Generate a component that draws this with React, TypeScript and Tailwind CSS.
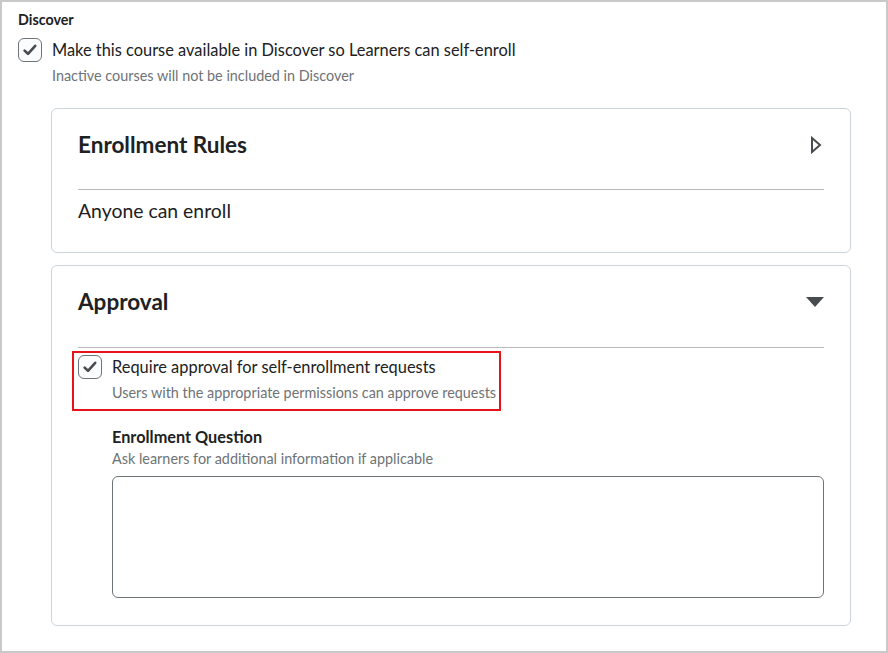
import React from "react";

function Check() {
  return (
    <div className="w-6 h-6 shrink-0 rounded-[6px] border border-[#6e7477] bg-[#fbfcfd] flex items-center justify-center">
      <svg width="16" height="16" viewBox="0 0 16 16">
        <path d="M2.6 8.6 L6 11.8 L13.2 3.8" fill="none" stroke="#494c4e" strokeWidth="2.6" strokeLinecap="round" strokeLinejoin="round" />
      </svg>
    </div>
  );
}

export default function App() {
  return (
    <div className="w-[888px] h-[653px] bg-white border-2 border-[#c9c9c9] text-[#202122]" style={{ fontFamily: "Lato, 'Noto Sans', sans-serif" }}>
      <div className="pl-[16px] pt-[9px] pr-[35px]">
        <div className="text-[14.3px] font-bold leading-[18px]">Discover</div>
        <div className="flex items-start gap-[10px] mt-[9px]">
          <Check />
          <div>
            <div className="text-[16.4px] leading-[22px] mt-px">Make this course available in Discover so Learners can self-enroll</div>
            <div className="text-[14.4px] text-[#6e7376] leading-[18px] mt-[6px]">Inactive courses will not be included in Discover</div>
          </div>
        </div>
        <div className="ml-[33px] mt-[23px] flex flex-col gap-[12px]">
          <div className="border border-[#cdd5dc] rounded-[6px] px-[26px] h-[145px]">
            <div className="flex items-center justify-between h-[81px] border-b border-[#b9b9b9]">
              <div className="text-[22.5px] font-bold leading-none mt-[-8px]">Enrollment Rules</div>
              <svg width="12" height="18" viewBox="0 0 12 18" className="mt-[-8px] mr-[2px]">
                <path d="M2 2 L10 9 L2 16 Z" fill="none" stroke="#494c4e" strokeWidth="2" strokeLinejoin="miter" />
              </svg>
            </div>
            <div className="text-[19.4px] leading-none mt-[11px]">Anyone can enroll</div>
          </div>
          <div className="border border-[#cdd5dc] rounded-[6px] px-[26px] h-[361px]">
            <div className="flex items-center justify-between h-[82px] border-b border-[#b9b9b9]">
              <div className="text-[22.5px] font-bold leading-none mt-[-9px]">Approval</div>
              <svg width="18" height="10" viewBox="0 0 18 10" className="mt-[-9px]">
                <path d="M0 0 L18 0 L9 10 Z" fill="#494c4e" />
              </svg>
            </div>
            <div className="ml-[-6px] mt-[3px] w-[429px] h-[60px] border-2 border-[#e8121b] pl-[4px] pt-[2px]">
              <div className="flex items-start gap-[10px]">
                <Check />
                <div>
                  <div className="text-[16.4px] leading-[22px] mt-[1px]">Require approval for self-enrollment requests</div>
                  <div className="text-[14.4px] text-[#6e7376] leading-[18px] mt-[6px]">Users with the appropriate permissions can approve requests</div>
                </div>
              </div>
            </div>
            <div className="ml-[34px] mt-[16px]">
              <div className="text-[16.3px] font-bold leading-[20px]">Enrollment Question</div>
              <div className="text-[14.4px] text-[#6e7376] leading-[18px] mt-[3px]">Ask learners for additional information if applicable</div>
              <div className="mt-[8px] h-[122px] border border-[#6e7477] rounded-[6px] bg-white" />
            </div>
          </div>
        </div>
      </div>
    </div>
  );
}
